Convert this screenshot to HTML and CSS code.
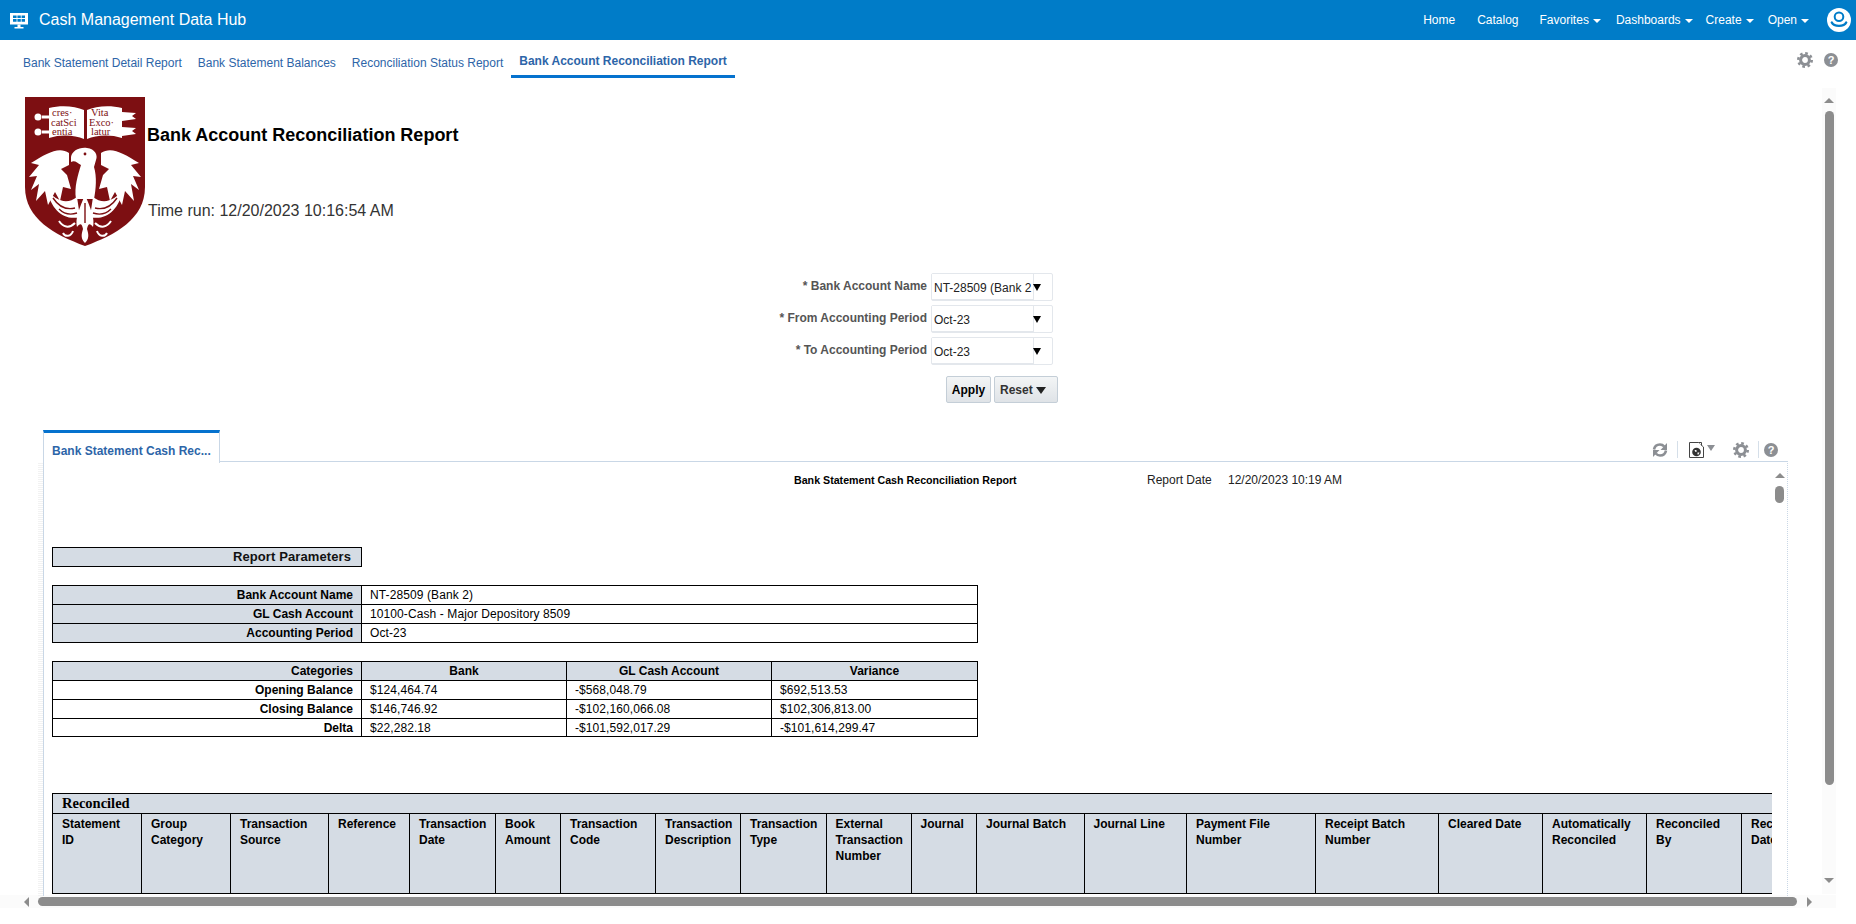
FILE: index.html
```html
<!DOCTYPE html>
<html lang="en">
<head>
<meta charset="utf-8">
<title>Bank Account Reconciliation Report</title>
<link rel="stylesheet" href="styles.css">
</head>
<body>
<header class="topbar">
  <svg class="app-icon" viewBox="0 0 18 16" aria-hidden="true">
    <path fill="#fff" d="M0 0h18v11.500H0z"/>
    <path fill="#007cc8" d="M3 2.500h3.600v2.500H3zM7.400 2.500h3.400v2.500H7.400zM11.600 2.500H15v2.500h-3.400zM3 6h3.600v2.700H3zM7.400 6h3.400v2.700H7.400zM11.600 6H15v2.700h-3.400z"/>
    <path fill="#fff" d="M7.500 11.500h3v2.500h-3zM4.500 14h9v1.500h-9z"/>
  </svg>
  <span class="app-title">Cash Management Data Hub</span>
  <nav class="global-nav">
    <a class="nav-home">Home</a>
    <a class="nav-catalog">Catalog</a>
    <a class="nav-fav">Favorites<i class="caret"></i></a>
    <a class="nav-dash">Dashboards<i class="caret"></i></a>
    <a class="nav-create">Create<i class="caret"></i></a>
    <a class="nav-open">Open<i class="caret"></i></a>
  </nav>
  <svg class="avatar" viewBox="0 0 24 24" aria-hidden="true">
    <circle cx="12" cy="12" r="12" fill="#fff"/>
    <circle cx="12" cy="8.800" r="4.300" fill="none" stroke="#007cc8" stroke-width="2"/>
    <path d="M4.800 14.500C7 19 17 19 19.200 14.500" fill="none" stroke="#007cc8" stroke-width="2.400" stroke-linecap="round"/>
  </svg>
</header>

<div class="page-tabs">
  <a class="page-tab">Bank Statement Detail Report</a>
  <a class="page-tab">Bank Statement Balances</a>
  <a class="page-tab">Reconciliation Status Report</a>
  <a class="page-tab active">Bank Account Reconciliation Report</a>
  <div class="page-tools">
    <svg class="gear" viewBox="0 0 16 16" aria-hidden="true">
      <circle cx="8" cy="8" r="4.400" fill="none" stroke="#8c8f94" stroke-width="3"/>
      <circle cx="8" cy="8" r="6.700" fill="none" stroke="#8c8f94" stroke-width="2.600" stroke-dasharray="2.630 2.630"/>
    </svg>
    <span class="help">?</span>
  </div>
</div>

<main class="workspace">
  <div class="canvas">
    <section class="report-head">
      <svg class="crest" viewBox="0 0 120 149" aria-label="University crest">
        <path fill="#7d0f12" d="M0 0H120V90C120 122 90 138 60 149C30 138 0 122 0 90Z"/>
        <path fill="#fff" d="M24 11C36 8 50 9 59 13V42C50 38 36 37 24 41ZM62 13C71 9 85 8 97 11V41C85 37 71 38 62 42Z"/>
        <circle cx="13" cy="20" r="3.500" fill="#fff"/><circle cx="13" cy="35" r="3.500" fill="#fff"/>
        <path fill="#fff" d="M17 18.500h7v3h-7zM17 33.500h7v3h-7zM97 15l14 1-4 3 4 3-14 2zM97 30l14 1-4 3 4 3-14 2z"/>
        <g class="crest-motto">
          <text x="27" y="19">cres·</text><text x="26" y="28.500">catSci</text><text x="27" y="38">entia</text>
          <text x="66" y="19">Vita</text><text x="64" y="28.500">Exco·</text><text x="66" y="38">latur</text>
        </g>
        <path fill="#fff" d="M44 56C34 49 22 56 6 66L14 68 4 80 12 79 6 93 14 87 11 104 20 94 23 108 30 95 35 104 38 90 46 92 42 78 36 72 44 68Z"/>
        <path fill="#fff" d="M76 56C86 49 98 56 114 66L106 68 116 80 108 79 114 93 106 87 109 104 100 94 97 108 90 95 85 104 82 90 74 92 78 78 84 72 76 68Z"/>
        <path fill="#fff" d="M46 60C47 54 54 50 62 51C70 52 73 58 71 63L69 70C72 80 71 92 69 102L51 102C49 90 53 78 56 68C52 66 50 63 46 65Z"/>
        <circle cx="60" cy="57" r="1.400" fill="#7d0f12"/>
        <path fill="#fff" d="M60 98C54 112 50 122 52 130C55 126 57 126 58 132C56 138 56 142 60 146C64 142 64 138 62 132C63 126 65 126 68 130C70 122 66 112 60 98Z"/>
        <path fill="#fff" d="M52 100C42 108 30 104 22 92C26 114 40 124 55 120ZM68 100C78 108 90 104 98 92C94 114 80 124 65 120Z"/>
        <path class="flame-cut" d="M28 101C34 110 42 113 50 111M34 112C40 118 46 118 52 116M92 101C86 110 78 113 70 111M86 112C80 118 74 118 68 116M60 106V126"/>
        <path class="flame" d="M50 126C44 132 38 130 34 124M70 126C76 132 82 130 86 124M48 134C46 140 40 140 38 136M72 134C74 140 80 140 82 136"/>
      </svg>
      <div class="report-titles">
        <h1>Bank Account Reconciliation Report</h1>
        <p>Time run: 12/20/2023 10:16:54 AM</p>
      </div>
    </section>

    <section class="prompts">
      <label>* Bank Account Name</label>
      <div class="select"><span>NT-28509 (Bank 2</span><i class="drop"></i></div>
      <label>* From Accounting Period</label>
      <div class="select"><span>Oct-23</span><i class="drop"></i></div>
      <label>* To Accounting Period</label>
      <div class="select"><span>Oct-23</span><i class="drop"></i></div>
      <div class="actions">
        <button class="btn apply" type="button">Apply</button>
        <button class="btn reset" type="button">Reset <i class="btn-caret"></i></button>
      </div>
    </section>

    <section class="panel">
      <div class="panel-head">
        <div class="panel-tab">Bank Statement Cash Rec...</div>
        <div class="panel-tools">
          <svg class="sync" viewBox="0 0 16 16" aria-hidden="true">
            <path fill="none" stroke="#8c8f94" stroke-width="2.600" d="M2 7.500C2.500 4.500 5 2.500 8 2.500c1.800 0 3.200.8 4.200 2"/>
            <path fill="#8c8f94" d="M15 1v7H8.500z"/>
            <path fill="none" stroke="#8c8f94" stroke-width="2.600" d="M14 8.500c-.5 3-3 5-6 5-1.800 0-3.200-.8-4.200-2"/>
            <path fill="#8c8f94" d="M1 15V8h6.500z"/>
          </svg>
          <i class="divider"></i>
          <svg class="doc" viewBox="0 0 15 16" aria-hidden="true">
            <path fill="#fff" stroke="#444" stroke-width="1" d="M.5.500h9l5 4.500v10.500H.5z"/>
            <path fill="#fff" stroke="#444" stroke-width="1" d="M9.500.500h3v3"/>
            <circle cx="7.500" cy="10" r="4.300" fill="#333"/>
            <path fill="#fff" d="M5.500 8h2v2h-1zM8.500 10.500h2l-1 2h-1z"/>
          </svg>
          <i class="doc-caret"></i>
          <svg class="gear" viewBox="0 0 16 16" aria-hidden="true">
            <circle cx="8" cy="8" r="4.400" fill="none" stroke="#8c8f94" stroke-width="3"/>
            <circle cx="8" cy="8" r="6.700" fill="none" stroke="#8c8f94" stroke-width="2.600" stroke-dasharray="2.630 2.630"/>
          </svg>
          <i class="divider second"></i>
          <span class="help">?</span>
        </div>
      </div>

      <div class="panel-body">
        <div class="doc-view">
          <div class="doc-title">
            <strong>Bank Statement Cash Reconciliation Report</strong>
            <span class="date-label">Report Date</span>
            <span class="date-value">12/20/2023 10:19 AM</span>
          </div>

          <div class="param-heading">Report Parameters</div>

          <table class="grid params">
            <colgroup><col class="c-label"><col></colgroup>
            <tr><th>Bank Account Name</th><td>NT-28509 (Bank 2)</td></tr>
            <tr><th>GL Cash Account</th><td>10100-Cash - Major Depository 8509</td></tr>
            <tr><th>Accounting Period</th><td>Oct-23</td></tr>
          </table>

          <table class="grid cats">
            <colgroup><col class="c-label"><col class="c-amt"><col class="c-amt"><col></colgroup>
            <tr class="head"><th class="right">Categories</th><th>Bank</th><th>GL Cash Account</th><th>Variance</th></tr>
            <tr><td class="rowname">Opening Balance</td><td>$124,464.74</td><td>-$568,048.79</td><td>$692,513.53</td></tr>
            <tr><td class="rowname">Closing Balance</td><td>$146,746.92</td><td>-$102,160,066.08</td><td>$102,306,813.00</td></tr>
            <tr class="short"><td class="rowname">Delta</td><td>$22,282.18</td><td>-$101,592,017.29</td><td>-$101,614,299.47</td></tr>
          </table>

          <table class="recon">
            <colgroup>
              <col><col><col><col><col><col><col><col><col><col><col><col><col><col><col><col><col><col><col>
            </colgroup>
            <tr class="recon-title"><th colspan="19">Reconciled</th></tr>
            <tr class="recon-head">
              <th>Statement ID</th><th>Group Category</th><th>Transaction Source</th><th>Reference</th><th>Transaction Date</th><th>Book Amount</th><th>Transaction Code</th><th>Transaction Description</th><th>Transaction Type</th><th>External Transaction Number</th><th>Journal</th><th>Journal Batch</th><th>Journal Line</th><th>Payment File Number</th><th>Receipt Batch Number</th><th>Cleared Date</th><th>Automatically Reconciled</th><th>Reconciled By</th><th>Reconciled Date</th>
            </tr>
          </table>
        </div>
        <div class="inner-scroll">
          <i class="arrow-up"></i>
          <i class="inner-thumb"></i>
        </div>
      </div>
    </section>
  </div>

  <div class="outer-scroll">
    <i class="arrow-up"></i>
    <i class="outer-thumb"></i>
    <i class="arrow-down"></i>
  </div>

  <div class="h-scroll">
    <i class="arrow-left"></i>
    <i class="h-thumb"></i>
    <i class="arrow-right"></i>
  </div>
</main>
</body>
</html>
```

FILE: styles.css
```css
* { box-sizing: border-box; }
html, body { margin: 0; height: 924px; overflow: hidden; background: #fff; }
body { font-family: "Liberation Sans", Arial, sans-serif; font-size: 12px; color: #000; }
a { cursor: pointer; }
i { display: block; }

/* top bar */
.topbar { height: 40px; background: #007cc8; color: #fff; display: flex; align-items: center; padding-left: 10px; }
.app-icon { width: 18px; height: 16px; margin-top: 2px; flex: none; }
.app-title { font-size: 16px; margin-left: 11px; margin-top: -1px; }
.global-nav { margin-left: auto; display: flex; align-items: center; }
.global-nav a { display: flex; align-items: center; font-size: 12px; }
.nav-catalog { margin-left: 22px; }
.nav-fav { margin-left: 21px; }
.nav-dash { margin-left: 15px; }
.nav-create { margin-left: 13px; }
.nav-open { margin-left: 14px; }
.caret { width: 0; height: 0; margin: 2px 0 0 4px; border: 4px solid transparent; border-top: 4px solid #fff; border-bottom: 0; }
.avatar { width: 24px; height: 24px; margin: 0 5px 0 18px; flex: none; }

/* page tabs */
.page-tabs { height: 39px; display: flex; align-items: flex-start; padding-left: 15px; position: relative; }
.page-tab { color: #2d65a8; font-size: 12px; padding: 16px 8px 0; height: 39px; }
.page-tab.active { font-weight: bold; padding: 14px 8px 0; width: 224px; height: 38px; border-bottom: 3px solid #0572ce; white-space: nowrap; }
.page-tools { display: flex; align-items: center; gap: 11px; margin: 12px 18px 0 auto; }
.gear { width: 16px; height: 16px; display: block; flex: none; }
.help { width: 14px; height: 14px; border-radius: 50%; background: #8c8f94; color: #fff; font-size: 11px; font-weight: bold; line-height: 14px; text-align: center; display: block; flex: none; }

/* workspace */
.workspace { display: grid; grid-template-columns: 1fr 34px; grid-template-rows: 818px 27px; height: 845px; }
.canvas { padding-left: 25px; min-width: 0; overflow: hidden; grid-column: 1; grid-row: 1; }

.report-head { display: flex; height: 149px; margin-top: 18px; }
.crest { width: 120px; height: 149px; flex: none; }
.crest-motto text { font-family: "Liberation Serif", serif; font-size: 10.500px; fill: #7d0f12; }
.flame { fill: none; stroke: #fff; stroke-width: 2; }
.flame-cut { fill: none; stroke: #7d0f12; stroke-width: 1.400; }
.report-titles { margin-left: 2px; }
.report-titles h1 { margin: 27px 0 0; font-size: 18px; line-height: 22px; font-weight: bold; color: #000; }
.report-titles p { margin: 54px 0 0 1px; font-size: 16px; line-height: 22px; color: #333; }

/* prompts */
.prompts { width: 1033px; margin-top: 27px; display: grid; grid-template-columns: 902px 122px; grid-auto-rows: 32px; justify-items: end; align-items: start; column-gap: 4px; }
.prompts label { font-weight: bold; color: #555; font-size: 12px; line-height: 14px; padding-top: 6px; }
.select { width: 122px; height: 28px; border: 1px solid #e3e7ec; border-radius: 2px; display: flex; justify-self: start; }
.select span { width: 102px; height: 26px; border-right: 1px solid #e3e7ec; border-bottom: 1px solid #e3e7ec; padding: 7px 2px 0; font-size: 12px; line-height: 14px; color: #222; overflow: hidden; white-space: nowrap; background: #fff; }
.drop { width: 0; height: 0; margin: 10px 0 0 -1px; border: 4.500px solid transparent; border-top: 7px solid #000; border-bottom: 0; }
.actions { grid-column: 2; display: flex; gap: 3px; justify-self: start; margin: 7px 0 0 15px; }
.btn { height: 27px; border: 1px solid #c4ced7; border-radius: 2px; background: linear-gradient(#f3f5f6, #dfe3e7); font: bold 12px "Liberation Sans", Arial, sans-serif; color: #000; padding: 0; display: flex; align-items: center; justify-content: center; }
.apply { width: 45px; }
.reset { width: 64px; color: #333; gap: 3px; justify-content: flex-start; padding-left: 5px; }
.btn-caret { width: 0; height: 0; border: 5px solid transparent; border-top: 7px solid #222; border-bottom: 0; margin-top: 1px; }

/* panel */
.panel { margin: 29px 0 0 18px; width: 1745px; }
.panel-head { height: 33px; display: flex; position: relative; }
.panel-tab { width: 177px; height: 33px; border-top: 3px solid #0572ce; border-left: 1px solid #c9d7e6; border-right: 1px solid #c9d7e6; padding: 11px 0 0 8px; font-weight: bold; color: #2d65a8; font-size: 12px; line-height: 14px; background: #fff; position: relative; z-index: 1; }
.panel-tools { flex: 1; border-bottom: 1px solid #c9d7e6; height: 32px; display: flex; align-items: flex-start; padding: 11px 0 0 1432px; }
.sync { width: 16px; height: 16px; flex: none; margin-top: 1px; }
.divider { width: 1px; height: 17px; background: #d5dfe9; margin-left: 9px; flex: none; }
.doc { width: 15px; height: 16px; margin: 1px 0 0 11px; flex: none; }
.doc-caret { width: 0; height: 0; margin: 4px 0 0 3px; border: 4px solid transparent; border-top: 6px solid #8c8f94; border-bottom: 0; flex: none; }
.panel-tools .gear { margin: 1px 0 0 18px; }
.divider.second { margin-left: 9px; }
.panel-tools .help { margin: 2px 0 0 5px; }

.panel-body { height: 433px; display: flex; border-left: 1px solid #c9d7e6; border-right: 1px dotted #c9d7e6; position: relative; }
.panel-body::before { content: ""; position: absolute; left: -6px; top: 0; bottom: 0; width: 5px; background: repeating-linear-gradient(#f2f2f2 0 1px, #fff 1px 2px); }
.doc-view { width: 1728px; overflow: hidden; padding: 10px 0 0 8px; flex: none; }
.inner-scroll { flex: 1; padding-top: 10px; display: flex; flex-direction: column; align-items: center; }
.inner-thumb { width: 9px; height: 17px; border-radius: 5px; background: #8c8c8c; margin-top: 8px; }
.arrow-up { width: 0; height: 0; border: 5px solid transparent; border-bottom: 5px solid #8c8c8c; border-top: 0; }

.doc-title { display: flex; height: 14px; line-height: 14px; }
.doc-title strong { margin-left: 742px; font-size: 10.670px; width: 223px; white-space: nowrap; }
.date-label { margin-left: 130px; width: 81px; color: #222; font-size: 12px; }
.date-value { color: #222; font-size: 12px; white-space: nowrap; }

.param-heading { width: 310px; height: 20px; margin-top: 60px; border: 1px solid #000; background: #d5dce4; text-align: right; padding-right: 10px; font-weight: bold; font-size: 13px; line-height: 18px; letter-spacing: .1px; color: #111; }

.grid { border-collapse: collapse; table-layout: fixed; width: 926px; }
.grid th, .grid td { border: 1px solid #000; height: 19px; padding: 0; font-size: 12px; line-height: 16px; color: #000; }
.c-label { width: 309px; }
.c-amt { width: 205px; }
.params { margin-top: 18px; }
.params th { background: #d5dce4; text-align: right; padding-right: 8px; }
.params td { padding-left: 8px; letter-spacing: .1px; }
.cats { margin-top: 18px; }
.cats .head th { background: #d5dce4; text-align: center; }
.cats th.right { text-align: right; padding-right: 8px; }
.cats td { padding-left: 8px; letter-spacing: .08px; }
.cats td.rowname { text-align: right; padding: 0 8px 0 0; font-weight: bold; letter-spacing: 0; }
.cats .short td { height: 18px; }

.recon { border-collapse: collapse; table-layout: fixed; width: 1784px; margin-top: 56px; }
.recon col:nth-child(1), .recon col:nth-child(2) { width: 89px; }
.recon col:nth-child(3) { width: 98px; }
.recon col:nth-child(4) { width: 81px; }
.recon col:nth-child(5) { width: 86px; }
.recon col:nth-child(6) { width: 65px; }
.recon col:nth-child(7) { width: 95px; }
.recon col:nth-child(8), .recon col:nth-child(10) { width: 85px; }
.recon col:nth-child(9) { width: 85.500px; }
.recon col:nth-child(11) { width: 65.500px; }
.recon col:nth-child(12) { width: 107.500px; }
.recon col:nth-child(13) { width: 102.500px; }
.recon col:nth-child(14) { width: 129px; }
.recon col:nth-child(15) { width: 123px; }
.recon col:nth-child(16), .recon col:nth-child(17) { width: 104px; }
.recon col:nth-child(18), .recon col:nth-child(19) { width: 95px; }
.recon th { background: #d5dce4; border: 1px solid #000; text-align: left; vertical-align: top; font-size: 12px; line-height: 16px; padding: 2px 9px; font-weight: bold; color: #000; }
.recon-title th { height: 20px; font-family: "Liberation Serif", serif; font-size: 14.500px; line-height: 16px; padding: 1px 9px; }
.recon-head th { height: 80px; }

/* outer scrollbars */
.outer-scroll { grid-column: 2; grid-row: 1; background: #fbfbfb; width: 14px; height: 806px; margin-top: 9px; display: flex; flex-direction: column; align-items: center; padding-top: 10px; }
.outer-thumb { width: 9px; height: 674px; border-radius: 5px; background: #8c8c8c; margin-top: 8px; }
.arrow-down { width: 0; height: 0; border: 5px solid transparent; border-top: 5px solid #8c8c8c; border-bottom: 0; margin-top: 93px; }
.h-scroll { grid-column: 1 / -1; grid-row: 2; width: 1836px; height: 13px; margin-top: -2px; background: #fbfbfb; display: flex; align-items: center; padding-left: 24px; }
.h-thumb { width: 1759px; height: 9px; border-radius: 5px; background: #8c8c8c; margin-left: 9px; }
.arrow-left { width: 0; height: 0; border: 5px solid transparent; border-right: 5px solid #8c8c8c; border-left: 0; }
.arrow-right { width: 0; height: 0; border: 5px solid transparent; border-left: 5px solid #8c8c8c; border-right: 0; margin-left: 10px; }
```
